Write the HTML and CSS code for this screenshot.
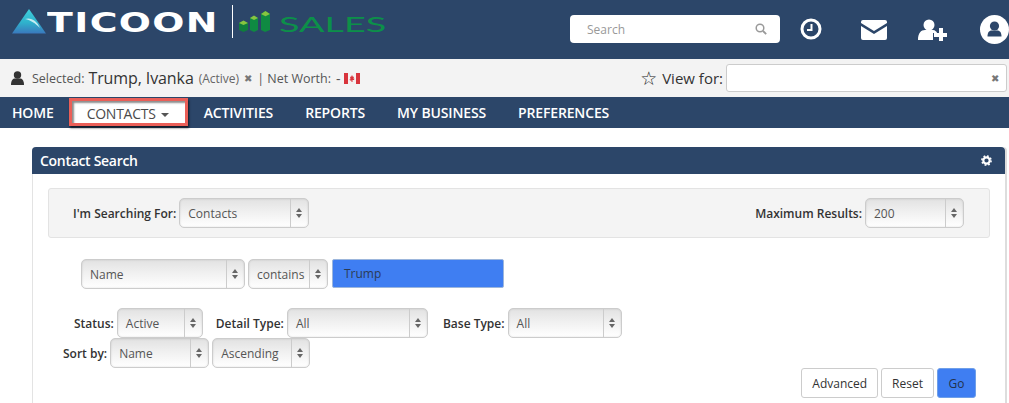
FILE: index.html
```html
<!DOCTYPE html>
<html>
<head>
    <meta charset="utf-8">
    <title>Contact Search</title>
    <link rel="stylesheet" href="styles.css">
</head>
<body>
    <header class="topbar">
        <div class="logo">
            <svg class="logo-mark" width="34" height="25" viewBox="0 0 34 25">
                <defs>
                    <linearGradient id="tri" x1="0" y1="0" x2="0" y2="1">
                        <stop offset="0" stop-color="#3fd0dc"/>
                        <stop offset="0.55" stop-color="#2fb2cc"/>
                        <stop offset="1" stop-color="#3a78bd"/>
                    </linearGradient>
                </defs>
                <path d="M17 0L34 24.500H0Z" fill="url(#tri)"/>
                <path d="M13 10C19 8 25 12 28 19C23 14 19 11.500 13 10Z" fill="#c5ecf2"/>
            </svg>
            <span class="logo-name">TICOON</span>
            <span class="logo-rule"></span>
            <svg class="logo-bars" width="32" height="21" viewBox="0 0 32 21">
                <path d="M0 12l4-2 5 2v7l-4.500 2L0 19Z" fill="#0f7d3c"/>
                <path d="M11 7l4-2 4 2v12l-4 2-4-2Z" fill="#0f8a42"/>
                <path d="M22 3l4-3 5 3v16l-5 2-4-2Z" fill="#0f8a42"/>
                <path d="M0 12l4.500-2.500 4.500 2.500-4.500 2ZM11 7l4-2.500 4 2.500-4 2ZM22 3l4.500-3 4.500 3-4.500 2.200Z" fill="#86c440"/>
            </svg>
            <span class="logo-sales">SALES</span>
        </div>
        <div class="top-tools">
            <div class="top-search">
                <span>Search</span>
                <svg width="12" height="12" viewBox="0 0 12 12"><circle cx="5" cy="5" r="3.800" fill="none" stroke="#999" stroke-width="1.500"/><path d="M8 8l3.200 3.200" stroke="#999" stroke-width="1.800"/></svg>
            </div>
            <svg class="tool-clock" width="22" height="22" viewBox="0 0 22 22"><circle cx="11" cy="11" r="9" fill="none" stroke="#fff" stroke-width="3"/><path d="M11.500 6v6H7" fill="none" stroke="#fff" stroke-width="2"/></svg>
            <svg class="tool-mail" width="26" height="20" viewBox="0 0 26 20"><path d="M2 0H24A2 2 0 0 1 26 2V3L13 11 0 3V2A2 2 0 0 1 2 0Z" fill="#fff"/><path d="M0 6L13 14 26 6V18A2 2 0 0 1 24 20H2A2 2 0 0 1 0 18Z" fill="#fff"/></svg>
            <svg class="tool-add" width="29" height="22" viewBox="0 0 29 22"><circle cx="11" cy="6" r="5.500" fill="#fff"/><path d="M0 21C0 14 3 11 7 11H15C17 11 19 13 19 14H15V21Z" fill="#fff"/><path d="M21 9h4v5h4v4h-4v4h-4v-4h-5v-4h5Z" fill="#fff"/></svg>
            <svg class="tool-user" width="29" height="29" viewBox="0 0 29 29"><circle cx="14.500" cy="14.500" r="14.500" fill="#fff"/><circle cx="14.500" cy="11" r="4.600" fill="#2c4669"/><path d="M7.500 21.500C7.500 17 9.500 15.500 12 15.500H17C19.500 15.500 21.500 17 21.500 21.500Z" fill="#2c4669"/></svg>
        </div>
    </header>

    <div class="selected-bar">
        <svg class="person" width="13" height="14" viewBox="0 0 13 14"><circle cx="6.500" cy="4" r="3.700" fill="#333"/><path d="M0 14C0 9 2 7.500 4 7.500H9C11 7.500 13 9 13 14Z" fill="#333"/></svg>
        <span class="sel-label">Selected:</span>
        <span class="sel-name">Trump, Ivanka</span>
        <span class="sel-status">(Active)</span>
        <span class="sel-x">✖</span>
        <span class="sel-label">| Net Worth:</span>
        <span class="sel-dash">-</span>
        <svg class="flag" width="16" height="11" viewBox="0 0 16 11"><rect width="16" height="11" fill="#f4f0f0"/><rect width="4" height="11" fill="#d8343c"/><rect x="12" width="4" height="11" fill="#d8343c"/><path d="M8 2l1 2 1-.5-.5 2.500 1-.5-.5 1.500H8.500V9h-1V7.500H6L5.500 6l1 .5L6 3.500l1 .5Z" fill="#d8343c"/></svg>
        <div class="view-for">
            <span class="star">☆</span>
            <span class="view-label">View for:</span>
            <div class="view-input"><span class="sel-x">✖</span></div>
        </div>
    </div>

    <nav class="mainnav">
        <a>HOME</a>
        <a class="active">CONTACTS <i class="caret"></i></a>
        <a>ACTIVITIES</a>
        <a>REPORTS</a>
        <a>MY BUSINESS</a>
        <a>PREFERENCES</a>
    </nav>

    <section class="panel">
        <div class="panel-head">
            <span>Contact Search</span>
            <svg width="11" height="11" viewBox="0 0 11 11"><circle cx="5.500" cy="5.500" r="3.200" fill="none" stroke="#fff" stroke-width="2.200"/><circle cx="5.500" cy="5.500" r="4.600" fill="none" stroke="#fff" stroke-width="1.600" stroke-dasharray="1.800 1.800"/></svg>
        </div>
        <div class="panel-body">
            <div class="well">
                <div class="field">
                    <label>I'm Searching For:</label>
                    <div class="sel w-contacts"><span>Contacts</span><b class="arrows"></b></div>
                </div>
                <div class="field">
                    <label>Maximum Results:</label>
                    <div class="sel w-max"><span>200</span><b class="arrows"></b></div>
                </div>
            </div>

            <div class="criteria">
                <div class="sel w-name"><span>Name</span><b class="arrows"></b></div>
                <div class="sel w-contains"><span>contains</span><b class="arrows"></b></div>
                <div class="term">Trump</div>
            </div>

            <div class="filters">
                <label>Status:</label>
                <div class="sel small w-status"><span>Active</span><b class="arrows"></b></div>
                <label class="gap-detail">Detail Type:</label>
                <div class="sel small w-detail"><span>All</span><b class="arrows"></b></div>
                <label class="gap-base">Base Type:</label>
                <div class="sel small w-base"><span>All</span><b class="arrows"></b></div>
            </div>
            <div class="filters sort">
                <label>Sort by:</label>
                <div class="sel small w-sort"><span>Name</span><b class="arrows"></b></div>
                <div class="sel small w-asc"><span>Ascending</span><b class="arrows"></b></div>
            </div>

            <div class="actions">
                <button>Advanced</button>
                <button>Reset</button>
                <button class="go">Go</button>
            </div>
        </div>
    </section>
</body>
</html>
```

FILE: styles.css
```css
* {
    box-sizing: border-box;
}

html, body {
    height: 403px;
    overflow: hidden;
}

body {
    margin: 0;
    background-color: #fff;
    color: #333;
    font-family: 'Open Sans', 'Liberation Sans', sans-serif;
    font-size: 12px;
}

.topbar {
    height: 59px;
    background-color: #2c4669;
    display: flex;
    justify-content: space-between;
    padding-left: 12px;
}

.logo {
    display: flex;
    align-items: flex-start;
    height: 39px;
    padding-top: 9px;
}

.logo-name {
    width: 169px;
    margin: 2px 0 0 1px;
    color: #fff;
    font-family: 'DejaVu Sans', sans-serif;
    font-weight: bold;
    font-size: 27px;
    line-height: 24px;
    letter-spacing: 1px;
    transform: scaleX(1.4);
    transform-origin: left center;
}

.logo-rule {
    width: 1px;
    height: 33px;
    margin-left: 16px;
    margin-top: -4px;
    background-color: #fff;
}

.logo-bars {
    margin: 2px 0 0 6px;
}

.logo-sales {
    width: 100px;
    margin-left: 8px;
    margin-top: 3px;
    color: #0c9049;
    font-family: 'Lato', sans-serif;
    font-weight: 400;
    font-size: 21px;
    line-height: 24px;
    transform: scaleX(1.8);
    transform-origin: left center;
}

.top-tools {
    display: flex;
    align-items: flex-start;
    padding-top: 15px;
}

.top-search {
    width: 210px;
    height: 28px;
    margin-right: 20px;
    padding: 0 13px 0 17px;
    background-color: #fff;
    border-radius: 4px;
    display: flex;
    align-items: center;
    justify-content: space-between;
    color: #999;
}

.tool-clock {
    margin-top: 3px;
}

.tool-mail {
    margin: 5px 0 0 39px;
}

.tool-add {
    margin: 4px 0 0 31px;
}

.tool-user {
    margin-left: 33px;
}

.selected-bar {
    height: 38px;
    padding: 0 2px 0 11px;
    background-color: #f3f3f3;
    display: flex;
    align-items: center;
    color: #555;
}

.person {
    margin-right: 8px;
}

.sel-label {
    font-size: 12.500px;
}

.sel-name {
    margin-left: 4px;
    color: #333;
    font-size: 16px;
    letter-spacing: -0.1px;
}

.sel-status {
    margin-left: 5px;
    font-size: 12px;
    color: #666;
}

.sel-x {
    margin: 0 5px;
    font-size: 10px;
    color: #777;
}

.sel-dash {
    margin: 0 4px 0 5px;
    font-size: 14px;
}

.view-for {
    margin-left: auto;
    display: flex;
    align-items: center;
}

.star {
    font-family: 'DejaVu Sans', sans-serif;
    font-size: 19px;
    color: #222;
    margin-right: 5px;
}

.view-label {
    font-size: 15px;
    color: #333;
    margin-right: 3px;
}

.view-input {
    width: 281px;
    height: 28px;
    background-color: #fff;
    border: 1px solid #ccc;
    border-radius: 3px;
    display: flex;
    align-items: center;
    justify-content: flex-end;
    padding-right: 2px;
}

.mainnav {
    height: 31px;
    padding-left: 12px;
    background-color: #2c4669;
    display: flex;
    align-items: center;
    font-size: 14px;
    font-weight: 600;
    letter-spacing: -0.15px;
    color: #fff;
}

.mainnav a {
    margin-right: 32px;
}

.mainnav a.active {
    width: 119px;
    height: 28px;
    margin: 1px 16px 0 -17px;
    padding-left: 15px;
    align-self: flex-start;
    background-color: #fff;
    color: #4a4a4a;
    font-weight: 400;
    letter-spacing: -0.25px;
    border: 3px solid #ea5f58;
    box-shadow: 1px 2px 2px rgba(0, 0, 0, 0.65), inset 2px 2px 2px rgba(0, 0, 0, 0.45);
    line-height: 25px;
}

.caret {
    display: inline-block;
    margin-left: 2px;
    vertical-align: middle;
    border-top: 4px solid #555;
    border-left: 4px solid transparent;
    border-right: 4px solid transparent;
}

.panel {
    margin: 19px 2px 0 32px;
    height: 256px;
    border-right: 2px solid #ddd;
    border-left: 1px solid #e3e3e3;
    border-radius: 4px 4px 0 0;
}

.panel-head {
    height: 27px;
    margin: 0 0 0 -1px;
    padding: 0 13px 0 8px;
    background-color: #2c4669;
    border-radius: 4px 4px 0 0;
    display: flex;
    align-items: center;
    justify-content: space-between;
    color: #fff;
    font-size: 14px;
    font-weight: 600;
    letter-spacing: -0.3px;
}

.panel-body {
    padding: 14px 15px 0 15px;
}

.well {
    height: 50px;
    padding: 0 25px 0 24px;
    background-color: #f4f4f4;
    border: 1px solid #e3e3e3;
    border-radius: 3px;
    display: flex;
    align-items: center;
    justify-content: space-between;
}

.field {
    display: flex;
    align-items: center;
}

label {
    font-weight: 600;
    color: #333;
    margin-right: 3px;
    font-size: 12px;
}

.sel {
    height: 30px;
    display: flex;
    align-items: center;
    justify-content: space-between;
    border: 1px solid #ccc;
    border-radius: 5px;
    background: linear-gradient(to bottom, #e2e2e2, #f0f0f0 45%, #fff);
    box-shadow: inset 0 0 2px rgba(0, 0, 0, 0.15);
    color: #555;
    font-size: 12px;
    padding-left: 8px;
}

.arrows {
    width: 18px;
    height: 100%;
    border-left: 1px solid #ccc;
    position: relative;
    flex: none;
}

.arrows::before, .arrows::after {
    content: "";
    position: absolute;
    left: 5px;
    border-left: 3px solid transparent;
    border-right: 3px solid transparent;
}

.arrows::before {
    top: 9px;
    border-bottom: 4px solid #666;
}

.arrows::after {
    top: 15px;
    border-top: 4px solid #666;
}

.w-contacts { width: 130px; }
.w-max { width: 99px; }
.w-name { width: 164px; }
.w-contains { width: 80px; }
.w-status { width: 86px; }
.w-detail { width: 141px; }
.w-base { width: 114px; }
.w-sort { width: 99px; }
.w-asc { width: 98px; }

.criteria {
    margin: 21px 0 0 33px;
    display: flex;
    gap: 3px;
}

.w-contains {
    margin-right: 1px;
}

.term {
    width: 172px;
    height: 29px;
    padding-left: 11px;
    background-color: #3f7ef2;
    border: 1px solid #9cb6dc;
    border-radius: 2px;
    color: #2c3b55;
    font-size: 12px;
    line-height: 27px;
}

.filters {
    margin: 19px 0 0 26px;
    display: flex;
    align-items: center;
}

.filters.sort {
    margin: 0 0 0 15px;
}

.w-asc {
    margin-left: 3px;
}

.gap-detail {
    margin-left: 13px;
}

.gap-base {
    margin-left: 15px;
}

.actions {
    margin-right: 14px;
    display: flex;
    justify-content: flex-end;
    gap: 3px;
}

.actions button {
    height: 30px;
    padding: 0 10px;
    background-color: #fff;
    border: 1px solid #ccc;
    border-radius: 3px;
    color: #333;
    font-family: inherit;
    font-size: 12px;
}

.actions button.go {
    width: 39px;
    padding: 0;
    background-color: #3f7ef2;
    border: 1px solid #6f9fe8;
    color: #23324c;
}
```
